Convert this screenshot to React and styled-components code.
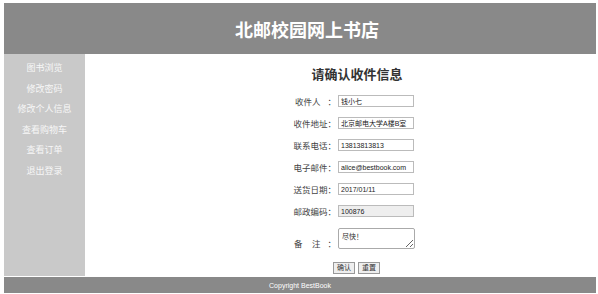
import styled, { createGlobalStyle } from 'styled-components'

const Global = createGlobalStyle`
  body {
    margin: 0;
    background: #fff;
    font-family: "Liberation Sans", "Noto Sans CJK SC", sans-serif;
  }
`

const Page = styled.div`
  padding: 3px 2px 2px 4px;
  width: 592px;
`

const Header = styled.header`
  height: 51px;
  background: #898989;
  display: flex;
  align-items: center;
  justify-content: center;
  padding-left: 14px;
  color: #fff;
  font-size: 18px;
  font-weight: bold;
`

const Body = styled.div`
  display: flex;
  height: 222px;
`

const Side = styled.nav`
  width: 81px;
  background: #c9c9c9;
  display: flex;
  flex-direction: column;
  align-items: center;
  padding-top: 8px;
  gap: 8.5px;
`

const SideLink = styled.a`
  color: #f7f7f7;
  font-size: 9px;
  line-height: 12px;
`

const Main = styled.main`
  flex: 1;
  display: flex;
  flex-direction: column;
  align-items: center;
  padding-top: 13px;
  padding-left: 16px;
`

const Title = styled.h2`
  margin: 0 0 13px 0;
  font-size: 13px;
  line-height: 15px;
  font-weight: bold;
  color: #333;
  padding-left: 17px;
`

const Form = styled.form`
  display: flex;
  flex-direction: column;
  gap: 10px;
`

const Row = styled.div`
  display: flex;
  align-items: ${p => (p.$tall ? 'flex-end' : 'center')};
  height: ${p => (p.$tall ? '22px' : '12px')};
`

const Label = styled.span`
  width: 54px;
  margin-right: 2px;
  text-align: right;
  font-size: 8.5px;
  color: #444;
  white-space: pre;
`

const Input = styled.input`
  box-sizing: border-box;
  width: 76px;
  height: 12px;
  border: 1px solid #bbb;
  padding: 0 2px;
  font-size: 7px;
  font-family: "Liberation Sans", "Noto Sans CJK SC", sans-serif;
  color: #222;
  background: ${p => (p.readOnly ? '#eee' : '#fff')};
  outline: none;
`

const Note = styled.textarea`
  box-sizing: border-box;
  width: 77px;
  height: 21px;
  border: 1px solid #aaa;
  border-radius: 2px;
  padding: 2px 3px;
  font-size: 7px;
  font-family: "Liberation Sans", "Noto Sans CJK SC", sans-serif;
  color: #333;
  resize: both;
`

const Buttons = styled.div`
  display: flex;
  justify-content: center;
  gap: 3px;
  margin-top: 13px;
  padding-left: 16px;
`

const Btn = styled.button`
  height: 12px;
  padding: 0 3px;
  font-size: 7px;
  line-height: 10px;
  border: 1px solid #999;
  background: #eee;
  color: #333;
  font-family: "Liberation Sans", "Noto Sans CJK SC", sans-serif;
`

const Footer = styled.footer`
  height: 16px;
  background: #898989;
  color: #fff;
  font-size: 7px;
  display: flex;
  align-items: center;
  justify-content: center;
  margin-top: 1px;
`

const links = ['图书浏览', '修改密码', '修改个人信息', '查看购物车', '查看订单', '退出登录']

const fields = [
  { label: '收件人   ：', value: '钱小七' },
  { label: '收件地址：', value: '北京邮电大学A楼B室' },
  { label: '联系电话：', value: '13813813813' },
  { label: '电子邮件：', value: 'alice@bestbook.com' },
  { label: '送货日期：', value: '2017/01/11' },
  { label: '邮政编码：', value: '100876', readOnly: true },
]

export default function App() {
  return (
    <Page>
      <Global />
      <Header>北邮校园网上书店</Header>
      <Body>
        <Side>
          {links.map(l => <SideLink key={l}>{l}</SideLink>)}
        </Side>
        <Main>
          <Title>请确认收件信息</Title>
          <Form>
            {fields.map(f => (
              <Row key={f.label}>
                <Label>{f.label}</Label>
                <Input defaultValue={f.value} readOnly={f.readOnly} />
              </Row>
            ))}
            <Row $tall>
              <Label>{'备    注   ：'}</Label>
              <Note defaultValue="尽快！" />
            </Row>
          </Form>
          <Buttons>
            <Btn type="button">确认</Btn>
            <Btn type="button">重置</Btn>
          </Buttons>
        </Main>
      </Body>
      <Footer>Copyright BestBook</Footer>
    </Page>
  )
}
